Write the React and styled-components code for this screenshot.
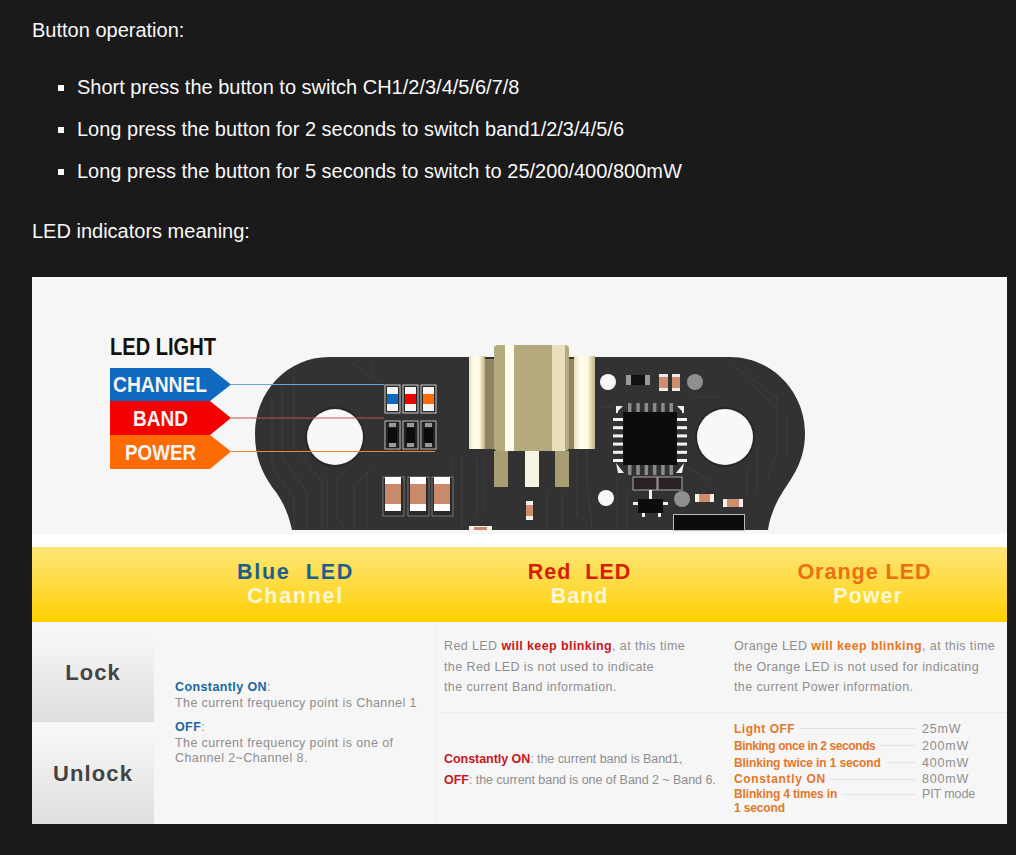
import styled, { createGlobalStyle } from 'styled-components';

const Global = createGlobalStyle`
  html, body {
    margin: 0;
    background: #1a1a1a;
  }
`;

const Page = styled.div`
  box-sizing: border-box;
  width: 1016px;
  height: 855px;
  overflow: hidden;
  padding: 15px 9px 0 32px;
  background: #1a1a1a;
  color: #f8f8f8;
  font-family: "Liberation Sans", Arial, sans-serif;
  font-size: 20px;
  line-height: 30px;
`;

const Para = styled.p`
  margin: 0 0 ${p => p.$after}px;
`;

const Bullets = styled.ul`
  margin: 0 0 30px;
  padding-left: 45px;
  list-style: square;
`;

const Bullet = styled.li`
  margin-bottom: 12px;
  &:last-child {
    margin-bottom: 0;
  }
`;

const Picture = styled.div`
  display: flex;
  flex-direction: column;
  width: 975px;
  height: 547px;
  background: #fff;
`;

const BoardArea = styled.div`
  height: 257px;
  margin-bottom: 13px;
  background: #f6f6f6;
  svg {
    display: block;
  }
`;

const HeadRow = styled.div`
  display: grid;
  grid-template-columns: 122px 283px 285px 285px;
  height: 75px;
  background: linear-gradient(#fde674 0%, #fedd4c 40%, #ffd000 100%);
`;

const HeadCell = styled.div`
  grid-column: ${p => p.$col};
  padding-top: 13px;
  text-align: center;
  font-weight: bold;
  font-size: 21.5px;
  line-height: 24px;
  letter-spacing: ${p => p.$spacing}px;
  white-space: pre;
`;

const HeadTitle = styled.div`
  color: ${p => p.$color};
`;

const HeadSub = styled.div`
  padding-left: ${p => p.$shift || 0}px;
  color: #fff7d6;
`;

const Table = styled.div`
  display: flex;
  flex: 1;
  background: #f6f6f6;
  color: #8e8e8e;
  font-size: 12.5px;
  letter-spacing: 0.4px;
`;

const Labels = styled.div`
  display: flex;
  flex-direction: column;
  width: 122px;
`;

const LabelCell = styled.div`
  box-sizing: border-box;
  display: flex;
  align-items: center;
  justify-content: center;
  height: ${p => p.$h}px;
  padding-top: 2px;
  background: linear-gradient(#f6f6f6 15%, #dedede 100%);
  color: #434343;
  font-size: 22px;
  font-weight: bold;
  letter-spacing: 1.1px;
`;

const BlueCell = styled.div`
  box-sizing: border-box;
  width: 283px;
  padding: 58px 0 0 21px;
  border-right: 1px solid #eeeeee;
  line-height: 15.5px;
`;

const BlueBlock = styled.div`
  margin-bottom: 9px;
`;

const Column = styled.div`
  display: flex;
  flex-direction: column;
  width: ${p => p.$w}px;
`;

const Cell = styled.div`
  box-sizing: border-box;
  height: ${p => p.$h}px;
  padding: ${p => p.$pad};
  line-height: 20.6px;
  letter-spacing: ${p => (p.$tight ? '-0.05px' : 'inherit')};
  white-space: nowrap;
  border-bottom: ${p => (p.$line ? '1px solid #eeeeee' : 'none')};
`;

const Strong = styled.b`
  color: ${p => p.$color};
`;

const PowerRow = styled.div`
  display: flex;
  align-items: ${p => (p.$top ? 'flex-start' : 'center')};
  height: ${p => p.$h}px;
  line-height: 14px;
`;

const PowerName = styled.b`
  color: #e4772a;
  font-size: 12px;
  letter-spacing: ${p => p.$spacing}px;
`;

const Leader = styled.span`
  flex: 1;
  height: 1px;
  margin: ${p => (p.$top ? '7px' : '0')} 7px 0 5px;
  background: #e2e2e2;
`;

const PowerValue = styled.span`
  width: 85px;
  letter-spacing: ${p => p.$spacing}px;
`;

const pads = [0, 1, 2, 3, 4, 5];

const traces = [
  'M240 120 V190 L262 222 V253',
  'M250 110 V180 L275 215 V253',
  'M262 100 V170 L290 205 V253',
  'M340 86 V100 M320 86 L345 104 H352',
  'M340 190 L322 210 V253',
  'M430 180 V253 M420 180 V230 L412 245',
  'M545 175 V240 M555 130 V205 L560 253',
  'M700 88 L745 120 V175 L735 205',
  'M712 100 L755 140 V180',
  'M660 120 H690 M570 130 H580 M655 190 L680 205',
  'M295 200 V253 M305 200 V240 L315 253 M335 195 V253',
  'M445 180 V240 M452 180 V235 M515 215 V253 M530 215 V253',
  'M585 200 V253 M595 215 V253 M725 170 V215 M715 190 V220',
];

function Board() {
  return (
    <svg width="975" height="257" viewBox="0 0 975 257">
      <defs>
        <linearGradient id="wing" x1="0" x2="1" y1="0" y2="0">
          <stop offset="0" stopColor="#e9dfb8" />
          <stop offset="0.3" stopColor="#fffdf0" />
          <stop offset="0.65" stopColor="#fff9df" />
          <stop offset="1" stopColor="#bdb186" />
        </linearGradient>
      </defs>

      <text x="78" y="78" fontFamily="Liberation Sans" fontWeight="bold" fontSize="23" fill="#111" textLength="106" lengthAdjust="spacingAndGlyphs">LED LIGHT</text>

      <path d="M78 91 H178 L199 107.500 L178 124 H78 Z" fill="#0f69c0" />
      <path d="M78 124 H178 L199 141 L178 158 H78 Z" fill="#f40000" />
      <path d="M78 158 H178 L199 174.500 L178 192 H78 Z" fill="#fd6c04" />
      <text x="81" y="115" fontFamily="Liberation Sans" fontWeight="bold" fontSize="22" fill="#f5f5f5" textLength="94" lengthAdjust="spacingAndGlyphs">CHANNEL</text>
      <text x="101" y="149" fontFamily="Liberation Sans" fontWeight="bold" fontSize="22" fill="#f5f5f5" textLength="55" lengthAdjust="spacingAndGlyphs">BAND</text>
      <text x="93" y="183" fontFamily="Liberation Sans" fontWeight="bold" fontSize="22" fill="#f5f5f5" textLength="71" lengthAdjust="spacingAndGlyphs">POWER</text>

      <path d="M297 80 H698 C740 80 773 115 773 156 C773 190 755 205 745 225 C740 235 737 245 736 253 H260 C256 235 250 222 240 210 C230 195 223 180 223 157 C223 115 255 80 297 80 Z" fill="#323232" />
      <g fill="none" stroke="#3e3e3e" strokeWidth="1">
        {traces.map(d => <path key={d} d={d} />)}
      </g>

      <circle cx="303" cy="160" r="30" fill="#282828" />
      <circle cx="303" cy="160" r="28" fill="#f8f8f8" />
      <circle cx="693" cy="160" r="30" fill="#282828" />
      <circle cx="693" cy="160" r="28" fill="#f8f8f8" />

      <path d="M199 107.500 H352" stroke="#6aa5d8" strokeWidth="1" />
      <path d="M199 141 H352" stroke="#c05050" strokeWidth="1" />
      <path d="M199 174.500 H403" stroke="#e08a48" strokeWidth="1" />

      {[353, 371, 389].map((x, i) => (
        <g key={x}>
          <rect x={x} y="108" width="15" height="28" fill="#2a2a2a" stroke="#ccc" />
          <rect x={x + 2} y="110" width="11" height="24" fill="#f4f4f4" />
          <rect x={x + 2} y="117" width="11" height="10" fill={['#0f69c0', '#f40000', '#fd6c04'][i]} />
          <rect x={x} y="144" width="15" height="28" fill="#222" stroke="#bbb" />
          <rect x={x + 4} y="146" width="7" height="4" fill="#999" />
          <rect x={x + 3} y="151" width="9" height="15" fill="#0c0c0c" />
          <rect x={x + 4} y="166" width="7" height="4" fill="#999" />
        </g>
      ))}

      {[351, 376, 400].map(x => (
        <g key={x}>
          <rect x={x} y="200" width="21" height="39" fill="#2a2a2a" stroke="#999" strokeWidth="0.7" />
          <rect x={x + 2} y="200" width="16" height="34" fill="#fff" />
          <rect x={x + 2} y="207" width="16" height="20" fill="#c98a6c" />
        </g>
      ))}

      <rect x="437" y="79" width="16" height="93" fill="url(#wing)" />
      <rect x="542" y="79" width="21" height="93" fill="url(#wing)" />
      <rect x="453" y="82" width="10" height="90" fill="#8f8565" />
      <rect x="537" y="82" width="5" height="90" fill="#8f8565" />
      <rect x="462" y="68" width="75" height="106" rx="4" fill="#b5a97e" />
      <rect x="473" y="68" width="9" height="106" fill="#fffdf0" />
      <rect x="520" y="68" width="13" height="106" fill="#e8e0bd" />
      <rect x="462" y="174" width="14" height="36" fill="#a89d72" />
      <rect x="493" y="174" width="14" height="36" fill="#f6f3e2" />
      <rect x="523" y="174" width="14" height="36" fill="#a89d72" />

      <rect x="591" y="135" width="54" height="53" fill="#0c0c0c" />
      {pads.map(i => (
        <g key={i}>
          <rect x="581" y={141 + i * 8.200} width="10" height="3" fill="#f5f5f5" />
          <rect x="645" y={141 + i * 8.200} width="10" height="3" fill="#f5f5f5" />
          <rect x={596 + i * 8.300} y="126" width="3.500" height="9" fill="#8a8a8a" />
          <rect x={596 + i * 8.300} y="188" width="3.500" height="10" fill="#8a8a8a" />
        </g>
      ))}
      <path d="M584 129 H591 L586 134 V136 H584 Z M652 129 H645 L650 134 V136 H652 Z M584 186 L592 196 H586 Z M652 186 L644 196 H650 Z" fill="#f0f0f0" />

      <circle cx="576" cy="105" r="8" fill="#f8f8f8" />
      <circle cx="663" cy="105" r="8" fill="#8f8f8f" />
      <circle cx="574" cy="221" r="8" fill="#f8f8f8" />
      <circle cx="650" cy="222" r="8" fill="#8f8f8f" />

      <rect x="594" y="98" width="24" height="10" fill="#111" />
      <rect x="594" y="98" width="5" height="10" fill="#999" />
      <rect x="613" y="98" width="5" height="10" fill="#999" />
      <rect x="627" y="97" width="9" height="17" fill="#f0ece4" />
      <rect x="627" y="100" width="9" height="11" fill="#cf8d6e" />
      <rect x="640" y="97" width="8" height="17" fill="#f0ece4" />
      <rect x="640" y="100" width="8" height="11" fill="#cf8d6e" />

      <rect x="601" y="200" width="24" height="13" fill="#2a2222" stroke="#aaa" />
      <rect x="626" y="200" width="24" height="13" fill="#2a2222" stroke="#aaa" />
      <rect x="663" y="217" width="19" height="8" fill="#f5f1ea" />
      <rect x="667" y="217" width="11" height="8" fill="#cf8d6e" />
      <rect x="691" y="222" width="20" height="8" fill="#f5f1ea" />
      <rect x="695" y="222" width="12" height="8" fill="#cf8d6e" />

      <rect x="606" y="222" width="25" height="14" fill="#0c0c0c" />
      <path d="M617 213 h3 v9 h-3 Z M601 225 h5 v3 h-5 Z M631 225 h5 v3 h-5 Z M610 236 h3 v4 h-3 Z M626 236 h3 v4 h-3 Z" fill="#f0f0f0" />

      <rect x="641.500" y="237.500" width="71" height="16" fill="#0c0c0c" stroke="#bbb" />
      <rect x="494" y="224" width="7" height="19" fill="#f5f1ea" />
      <rect x="494" y="228" width="7" height="11" fill="#cf8d6e" />
      <rect x="437" y="249" width="23" height="4" fill="#f5f1ea" />
      <rect x="442" y="250" width="13" height="3" fill="#c98a6c" />
    </svg>
  );
}

const powerRows = [
  { name: 'Light OFF', value: '25mW', spacing: 0.5, h: 17 },
  { name: 'Binking once in 2 seconds', value: '200mW', spacing: -0.4, h: 17 },
  { name: 'Blinking twice in 1 second', value: '400mW', spacing: -0.13, h: 17 },
  { name: 'Constantly ON', value: '800mW', spacing: 0.65, h: 16 },
];

export default function App() {
  return (
    <Page>
      <Global />
      <Para $after={27}>Button operation:</Para>
      <Bullets>
        <Bullet>Short press the button to switch CH1/2/3/4/5/6/7/8</Bullet>
        <Bullet>Long press the button for 2 seconds to switch band1/2/3/4/5/6</Bullet>
        <Bullet>Long press the button for 5 seconds to switch to 25/200/400/800mW</Bullet>
      </Bullets>
      <Para $after={31}>LED indicators meaning:</Para>

      <Picture>
        <BoardArea>
          <Board />
        </BoardArea>
        <HeadRow>
          <HeadCell $col={2} $spacing={1.7}>
            <HeadTitle $color="#1b5f8f">{'Blue  LED'}</HeadTitle>
            <HeadSub>Channel</HeadSub>
          </HeadCell>
          <HeadCell $col={3} $spacing={1}>
            <HeadTitle $color="#d91c06">{'Red  LED'}</HeadTitle>
            <HeadSub>Band</HeadSub>
          </HeadCell>
          <HeadCell $col={4} $spacing={1}>
            <HeadTitle $color="#ee6f12">Orange LED</HeadTitle>
            <HeadSub $shift={7}>Power</HeadSub>
          </HeadCell>
        </HeadRow>
        <Table>
          <Labels>
            <LabelCell $h={100}>Lock</LabelCell>
            <LabelCell $h={102}>Unlock</LabelCell>
          </Labels>
          <BlueCell>
            <BlueBlock>
              <Strong $color="#1b66a0">Constantly ON</Strong>:<br />
              The current frequency point is Channel 1
            </BlueBlock>
            <BlueBlock>
              <Strong $color="#1b66a0">OFF</Strong>:<br />
              The current frequency point is one of<br />
              Channel 2~Channel 8.
            </BlueBlock>
          </BlueCell>
          <Column $w={285}>
            <Cell $h={91} $pad="14px 0 0 7px" $line>
              Red LED <Strong $color="#c8171c">will keep blinking</Strong>, at this time<br />
              the Red LED is not used to indicate<br />
              the current Band information.
            </Cell>
            <Cell $h={111} $pad="36px 0 0 7px" $tight>
              <Strong $color="#c8171c">Constantly ON</Strong>: the current band is Band1,<br />
              <Strong $color="#c8171c">OFF</Strong>: the current band is one of Band 2 ~ Band 6.
            </Cell>
          </Column>
          <Column $w={285}>
            <Cell $h={91} $pad="14px 0 0 12px" $line>
              Orange LED <Strong $color="#e8761e">will keep blinking</Strong>, at this time<br />
              the Orange LED is not used for indicating<br />
              the current Power information.
            </Cell>
            <Cell $h={111} $pad="7px 0 0 12px">
              {powerRows.map(row => (
                <PowerRow key={row.name} $h={row.h}>
                  <PowerName $spacing={row.spacing}>{row.name}</PowerName>
                  <Leader />
                  <PowerValue $spacing={0.8}>{row.value}</PowerValue>
                </PowerRow>
              ))}
              <PowerRow $h={28} $top>
                <PowerName $spacing={-0.15}>Blinking 4 times in<br />1 second</PowerName>
                <Leader $top />
                <PowerValue $spacing={-0.1}>PIT mode</PowerValue>
              </PowerRow>
            </Cell>
          </Column>
        </Table>
      </Picture>
    </Page>
  );
}
